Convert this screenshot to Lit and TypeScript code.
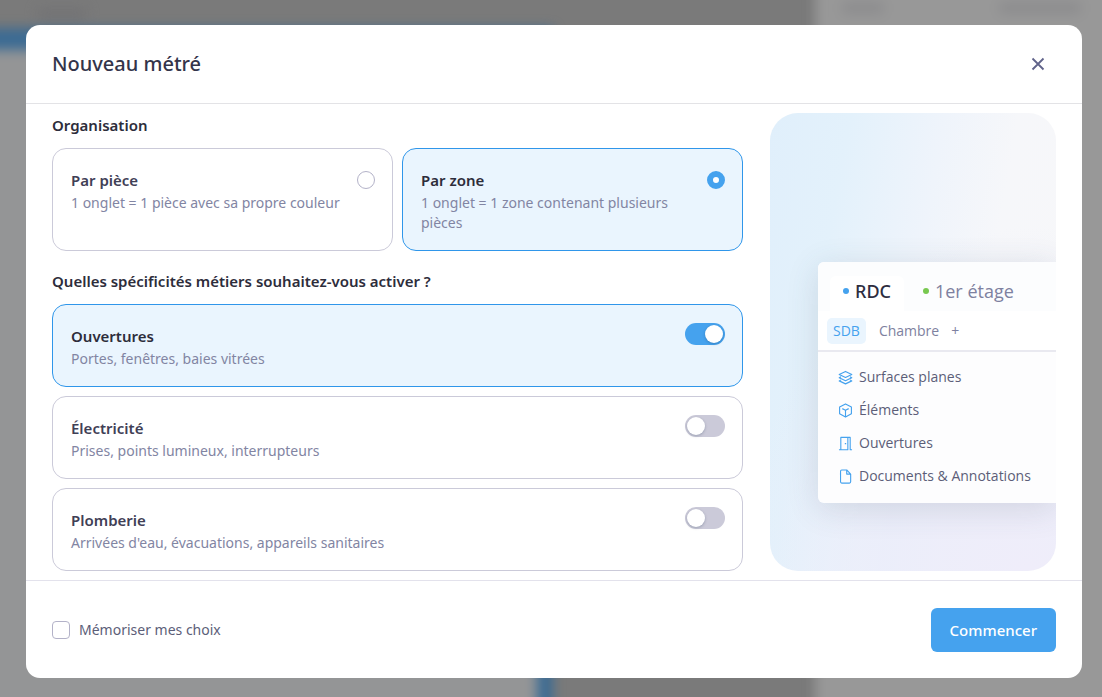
import { LitElement, html, css, svg } from "lit";
import { customElement, property, state } from "lit/decorators.js";

interface Choice {
  id: string;
  title: string;
  text: string;
}

const LAYOUTS: Choice[] = [
  { id: "piece", title: "Par pièce", text: "1 onglet = 1 pièce avec sa propre couleur" },
  { id: "zone", title: "Par zone", text: "1 onglet = 1 zone contenant plusieurs pièces" },
];

const TRADES: Choice[] = [
  { id: "ouvertures", title: "Ouvertures", text: "Portes, fenêtres, baies vitrées" },
  { id: "electricite", title: "Électricité", text: "Prises, points lumineux, interrupteurs" },
  { id: "plomberie", title: "Plomberie", text: "Arrivées d'eau, évacuations, appareils sanitaires" },
];

const ICONS = {
  layers: svg`<path d="M8 1.500 14.700 4.800 8 8 1.300 4.800Z"/><path d="M3.200 7.200 1.300 8.200 8 11.400l6.700-3.200-1.900-1"/><path d="M3.200 10.600 1.300 11.600 8 14.800l6.700-3.200-1.900-1"/>`,
  cube: svg`<path d="M8 1 14.300 4.300v7.200L8 15 1.700 11.500V4.300Z"/><path d="M4.600 6 8 7.700l3.400-1.700M8 7.700V15"/>`,
  door: svg`<path d="M1 14.700H3V1.500h7.500v13.200H3M10.500 1.500H13v13.200h2"/><path d="M8 7.500v1.300" stroke-width="1.500"/>`,
  file: svg`<path d="M9.300 1H4Q2.700 1 2.700 2.300v11.400Q2.700 15 4 15h8.200q1.300 0 1.300-1.300V5.400ZM9.300 1v4.400h4.200"/>`,
};

const ROWS: { icon: keyof typeof ICONS; label: string }[] = [
  { icon: "layers", label: "Surfaces planes" },
  { icon: "cube", label: "Éléments" },
  { icon: "door", label: "Ouvertures" },
  { icon: "file", label: "Documents & Annotations" },
];

/** Blurred application that stays visible around the dialog. */
@customElement("app-backdrop")
class AppBackdrop extends LitElement {
  static styles = css`
    :host {
      position: absolute;
      inset: 0;
      overflow: hidden;
      background: #7a7a7a;
    }
    .scene {
      height: calc(100% + 48px);
      margin-top: -24px;
      display: grid;
      grid-template-columns: 50% 1fr 26%;
      filter: blur(6px);
    }
    .plan {
      display: flex;
      flex-direction: column;
    }
    .bar {
      height: 52px;
      padding: 32px 38px 8px;
      box-sizing: border-box;
    }
    .bar i {
      display: block;
      width: 48px;
      height: 12px;
      background: #737375;
    }
    .sheet {
      flex: 1;
      background: #949596;
      border-top: 22px solid #3c6b93;
      border-right: 16px solid #3c6b93;
      margin: 0 -2px 0 -20px;
    }
    .side {
      background: #989898;
      margin-right: -20px;
      padding: 28px 42px 0 28px;
      display: flex;
      justify-content: space-between;
    }
    .side i {
      width: 40px;
      height: 8px;
      background: #868689;
      filter: blur(3px);
    }
    .side i:last-child {
      width: 80px;
    }
  `;
  render() {
    return html`<div class="scene">
      <div class="plan">
        <div class="bar"><i></i></div>
        <div class="sheet"></div>
      </div>
      <div></div>
      <div class="side"><i></i><i></i></div>
    </div>`;
  }
}

@customElement("plan-preview")
class PlanPreview extends LitElement {
  static styles = css`
    :host {
      display: flex;
      flex-direction: column;
      justify-content: flex-end;
      box-sizing: border-box;
      padding: 0 0 68px 48px;
      overflow: hidden;
      border-radius: 28px;
      font-family: "Open Sans", "Noto Sans", sans-serif;
      background:
        radial-gradient(100% 75% at 90% 100%, #efedfa 0%, rgba(234, 236, 250, 0.8) 50%, rgba(234, 238, 250, 0) 100%),
        linear-gradient(100deg, #e0effb 0%, #e3f1fb 22%, #eff4fb 48%, #f6f7fa 68%, #f7f7f9 100%);
    }
    .window {
      margin-right: -24px;
      border-radius: 6px;
      overflow: hidden;
      background: #fdfdfe;
    }
    .shadow {
      border-radius: 6px;
      box-shadow: 0 6px 32px rgba(60, 80, 100, 0.16);
    }
    .floors {
      display: flex;
      padding: 14px 12px 0;
      height: 49px;
      box-sizing: border-box;
      font-size: 18px;
      line-height: 30px;
      color: #7e81a0;
      gap: 6px;
      background: #fcfdfe;
    }
    .floor {
      display: flex;
      align-items: center;
      gap: 6px;
      padding: 0 13px 5px;
      border-radius: 6px 6px 0 0;
      white-space: nowrap;
    }
    .floor.on {
      background: #fff;
      color: #2d2d3f;
      font-family: "Noto Sans", sans-serif;
      font-weight: 500;
    }
    .dot {
      width: 6px;
      height: 6px;
      border-radius: 50%;
      background: #45a2ee;
    }
    .dot.green {
      background: #78c850;
    }
    .rooms {
      display: flex;
      align-items: center;
      height: 39px;
      padding: 0 9px;
      background: #fff;
      border-bottom: 2px solid #e9e9f0;
      font-size: 14px;
      line-height: 26px;
      color: #7e81a0;
    }
    .room {
      padding: 0 6px;
      border-radius: 5px;
    }
    .room.on {
      background: #eaf5fe;
      color: #45a2ee;
      margin-right: 7px;
    }
    .rows {
      display: flex;
      flex-direction: column;
      gap: 9px;
      padding: 13px 20px 15px;
      color: #5c5e78;
      font-size: 14px;
      line-height: 24px;
    }
    .row {
      display: flex;
      align-items: center;
      gap: 6px;
      white-space: nowrap;
    }
    .row svg {
      width: 15px;
      height: 15px;
      fill: none;
      stroke: #45a2ee;
      stroke-width: 1.2;
      stroke-linejoin: round;
    }
  `;
  render() {
    return html`<div class="shadow">
      <div class="window">
        <div class="floors">
          <div class="floor on"><span class="dot"></span>RDC</div>
          <div class="floor"><span class="dot green"></span>1er étage</div>
        </div>
        <div class="rooms">
          <span class="room on">SDB</span>
          <span class="room">Chambre</span>
          <span class="room">+</span>
        </div>
        <div class="rows">
          ${ROWS.map(
            (r) => html`<div class="row">
              <svg viewBox="0 0 16 16" aria-hidden="true">${ICONS[r.icon]}</svg>${r.label}
            </div>`
          )}
        </div>
      </div>
    </div>`;
  }
}

/** Selectable card, driven by a radio button or by a switch. */
@customElement("option-card")
class OptionCard extends LitElement {
  @property({ attribute: false }) choice!: Choice;
  @property() kind: "radio" | "switch" = "switch";
  @property({ type: Boolean, reflect: true }) checked = false;

  static styles = css`
    :host {
      display: flex;
    }
    .card {
      flex: 1;
      display: flex;
      align-items: flex-start;
      justify-content: space-between;
      gap: 12px;
      padding: 18px 17px 17px 18px;
      border: 1px solid #cbcad9;
      border-radius: 14px;
      background: #fff;
      cursor: pointer;
    }
    :host([checked]) .card {
      border-color: #2f96ea;
      background: #eaf5fe;
    }
    .title {
      display: block;
      font-size: 15px;
      line-height: 26px;
      font-weight: 600;
      color: #3f4056;
    }
    :host([checked]) .title {
      color: #2d2d3b;
    }
    .text {
      display: block;
      font-size: 14px;
      line-height: 20px;
      color: #8285a3;
    }
    input {
      appearance: none;
      flex: none;
      box-sizing: border-box;
      margin: 0;
      cursor: pointer;
    }
    .radio {
      width: 18px;
      height: 18px;
      margin-top: 4px;
      border: 1px solid #b3b2c8;
      border-radius: 50%;
      background: #fff;
    }
    .radio:checked {
      border: 6px solid #45a2ee;
    }
    .switch {
      width: 40px;
      height: 22px;
      padding: 2px;
      border-radius: 11px;
      background: #cbcad9;
      display: flex;
    }
    .switch::before {
      content: "";
      width: 18px;
      height: 18px;
      border-radius: 50%;
      background: #fff;
      box-shadow: 0 1px 3px rgba(0, 30, 60, 0.25);
    }
    .switch:checked {
      background: #45a2ee;
      justify-content: flex-end;
    }
  `;

  private toggle(e: Event) {
    this.checked = (e.target as HTMLInputElement).checked;
    this.dispatchEvent(new CustomEvent("pick", { detail: this.checked }));
  }

  render() {
    const radio = this.kind === "radio";
    return html`<label class="card">
      <span>
        <span class="title">${this.choice.title}</span>
        <span class="text">${this.choice.text}</span>
      </span>
      <input
        class=${this.kind}
        type=${radio ? "radio" : "checkbox"}
        name=${this.choice.id}
        .checked=${this.checked}
        @change=${this.toggle}
      />
    </label>`;
  }
}

@customElement("app-root")
class AppRoot extends LitElement {
  @state() private layout = "zone";
  @state() private active = new Set(["ouvertures"]);

  static styles = css`
    :host {
      display: block;
      position: relative;
      min-height: 100vh;
      box-sizing: border-box;
      padding: 25px 20px 19px 26px;
      font-family: "Noto Sans", "Open Sans", sans-serif;
      color: #2d2d3b;
    }
    .dialog {
      position: relative;
      border-radius: 14px;
      background: #fff;
    }
    header {
      display: flex;
      align-items: center;
      justify-content: space-between;
      padding: 24px 32px 24px 26px;
      border-bottom: 1px solid #e3e3e6;
    }
    h1 {
      margin: 0;
      font-size: 20px;
      line-height: 30px;
      font-weight: 500;
      color: #33344a;
    }
    .close {
      display: flex;
      padding: 4px;
      border: 0;
      background: none;
      cursor: pointer;
    }
    .close svg {
      width: 16px;
      height: 16px;
      fill: none;
      stroke: #60638a;
      stroke-width: 1.8;
    }
    .body {
      display: grid;
      grid-template-columns: 1fr 286px;
      gap: 27px;
      padding: 9px 26px;
    }
    fieldset {
      min-width: 0;
      margin: 0;
      padding: 0;
      border: 0;
    }
    fieldset + fieldset {
      margin-top: 18px;
    }
    legend {
      padding: 0;
      margin-bottom: 11px;
      font-size: 15px;
      line-height: 24px;
      font-weight: 600;
    }
    .pair {
      display: grid;
      grid-template-columns: 1fr 1fr;
      gap: 9px;
    }
    .stack {
      display: grid;
      gap: 9px;
    }
    footer {
      display: flex;
      align-items: center;
      justify-content: space-between;
      padding: 27px 26px 26px;
      border-top: 1px solid #e3e2ec;
    }
    .remember {
      display: flex;
      align-items: center;
      gap: 9px;
      font-size: 14px;
      line-height: 20px;
      color: #5c5e78;
      cursor: pointer;
    }
    .remember input {
      appearance: none;
      box-sizing: border-box;
      width: 18px;
      height: 18px;
      margin: 0;
      border: 1px solid #b3b2c8;
      border-radius: 4px;
      background: #fff;
    }
    .remember input:checked {
      background: #45a2ee;
    }
    .start {
      padding: 10px 19px;
      border: 0;
      border-radius: 6px;
      background: #45a2ee;
      color: #fff;
      font-family: inherit;
      font-size: 15px;
      line-height: 24px;
      font-weight: 500;
      cursor: pointer;
    }
  `;

  private setTrade(id: string, on: boolean) {
    const next = new Set(this.active);
    on ? next.add(id) : next.delete(id);
    this.active = next;
  }

  render() {
    return html`
      <app-backdrop></app-backdrop>
      <div class="dialog" role="dialog" aria-labelledby="title">
        <header>
          <h1 id="title">Nouveau métré</h1>
          <button class="close" type="button" aria-label="Fermer">
            <svg viewBox="0 0 16 16"><path d="M2.500 2.500 13.500 13.500M13.500 2.500 2.500 13.500" /></svg>
          </button>
        </header>
        <div class="body">
          <div>
            <fieldset>
              <legend>Organisation</legend>
              <div class="pair">
                ${LAYOUTS.map(
                  (c) => html`<option-card
                    kind="radio"
                    .choice=${c}
                    .checked=${this.layout === c.id}
                    @pick=${() => (this.layout = c.id)}
                  ></option-card>`
                )}
              </div>
            </fieldset>
            <fieldset>
              <legend>Quelles spécificités métiers souhaitez-vous activer ?</legend>
              <div class="stack">
                ${TRADES.map(
                  (c) => html`<option-card
                    kind="switch"
                    .choice=${c}
                    .checked=${this.active.has(c.id)}
                    @pick=${(e: CustomEvent) => this.setTrade(c.id, e.detail)}
                  ></option-card>`
                )}
              </div>
            </fieldset>
          </div>
          <plan-preview></plan-preview>
        </div>
        <footer>
          <label class="remember"><input type="checkbox" />Mémoriser mes choix</label>
          <button class="start" type="button">Commencer</button>
        </footer>
      </div>
    `;
  }
}
